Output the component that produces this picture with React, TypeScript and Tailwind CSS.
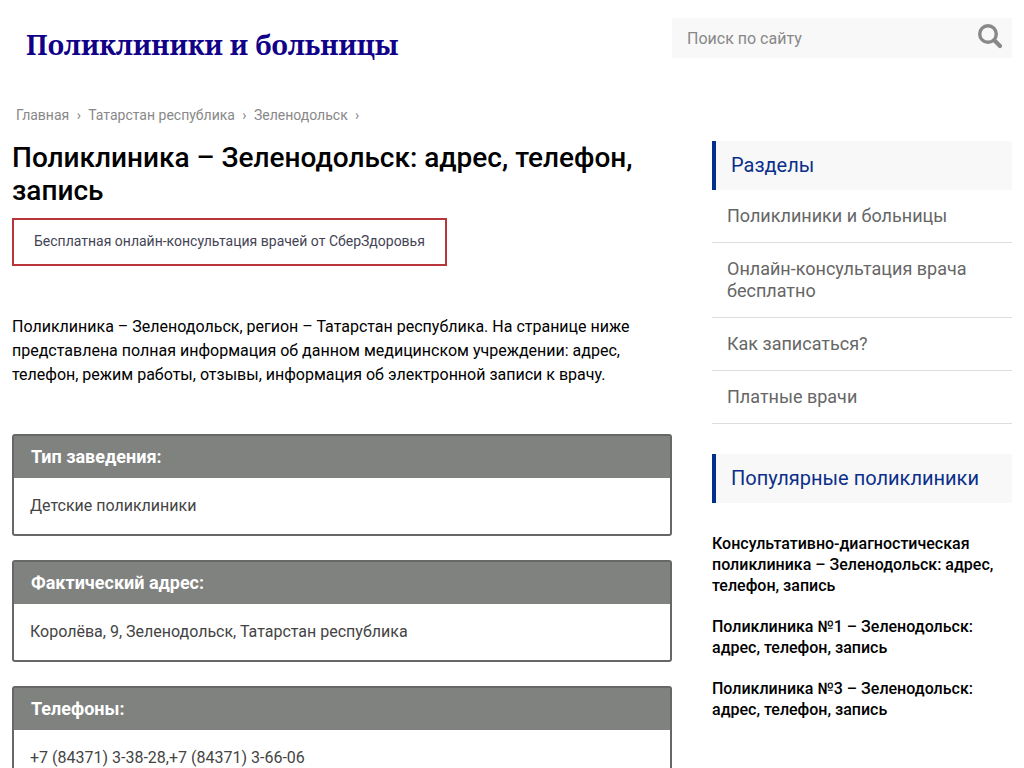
import React from "react";

const crumbs = ["Главная", "Татарстан республика", "Зеленодольск"];

const facts = [
  { title: "Тип заведения:", text: "Детские поликлиники" },
  { title: "Фактический адрес:", text: "Королёва, 9, Зеленодольск, Татарстан республика" },
  { title: "Телефоны:", text: "+7 (84371) 3-38-28,+7 (84371) 3-66-06" },
];

const sections = [
  "Поликлиники и больницы",
  "Онлайн-консультация врача бесплатно",
  "Как записаться?",
  "Платные врачи",
];

const popular = [
  "Консультативно-диагностическая поликлиника – Зеленодольск: адрес, телефон, запись",
  "Поликлиника №1 – Зеленодольск: адрес, телефон, запись",
  "Поликлиника №3 – Зеленодольск: адрес, телефон, запись",
];

function SideTitle({ children }: { children: React.ReactNode }) {
  return (
    <h2 className="border-l-4 border-[#002f8e] bg-[#f8f8f8] py-3 pl-[15px] text-xl leading-[25px] text-[#0b2f8a]">
      {children}
    </h2>
  );
}

export default function App() {
  return (
    <div className="min-h-screen bg-white px-3 font-['Roboto',sans-serif] text-black">
      <header className="flex items-start justify-between pt-[18px]">
        <a
          href="#"
          className="pt-[9px] pl-[14px] font-['Noto_Serif','PT_Serif','DejaVu_Serif',serif] text-[27px] leading-9 font-bold text-[#110088]"
        >
          Поликлиники и больницы
        </a>
        <form role="search" className="flex h-10 w-[340px] bg-[#f8f8f8]">
          <input
            type="search"
            aria-label="Поиск по сайту"
            placeholder="Поиск по сайту"
            className="min-w-0 flex-1 bg-transparent pt-0.5 pl-[15px] text-base text-[#888] outline-none placeholder:text-[#888]"
          />
          <button type="button" aria-label="Найти" className="flex w-11 items-center justify-center pb-1">
            <svg width="26" height="26" viewBox="0 0 26 26" fill="none" stroke="#888" aria-hidden="true">
              <circle cx="11" cy="11" r="8.3" strokeWidth="3.4" />
              <path d="M17.3 17.3 L23 23" strokeWidth="4.2" strokeLinecap="round" />
            </svg>
          </button>
        </form>
      </header>

      <nav aria-label="Навигация" className="mt-[41px] flex pl-1 text-sm leading-[22px] text-[#888]">
        {crumbs.map((c) => (
          <React.Fragment key={c}>
            <a href="#">{c}</a>
            <span className="w-[19px] text-center">›</span>
          </React.Fragment>
        ))}
      </nav>

      <div className="mt-[15px] flex items-start gap-10">
        <main className="min-w-0 flex-1">
          <h1 className="text-[28px] leading-[33px] font-medium">
            Поликлиника – Зеленодольск: адрес, телефон, запись
          </h1>
          <a
            href="#"
            className="mt-[11px] inline-block border-2 border-[#b8353a] px-5 pt-[10px] pb-3 text-sm leading-[22px] text-[#444455]"
          >
            Бесплатная онлайн-консультация врачей от СберЗдоровья
          </a>
          <p className="mt-[49px] text-base leading-6">
            Поликлиника – Зеленодольск, регион – Татарстан республика. На странице ниже
            представлена полная информация об данном медицинском учреждении: адрес,
            телефон, режим работы, отзывы, информация об электронной записи к врачу.
          </p>
          <div className="mt-[47px] flex flex-col gap-6">
            {facts.map((f) => (
              <section key={f.title} className="rounded-[3px] border-2 border-[#666866] bg-white">
                <h2 className="bg-[#80827f] px-[17px] py-[9px] text-lg leading-6 font-bold text-white">{f.title}</h2>
                <p className="px-4 py-4 text-base leading-6 text-[#444]">{f.text}</p>
              </section>
            ))}
          </div>
        </main>

        <aside className="w-[300px] shrink-0">
          <SideTitle>Разделы</SideTitle>
          <ul>
            {sections.map((s) => (
              <li key={s} className="border-b border-[#ddd] px-[15px] py-[15px] text-lg leading-[22px] text-[#666]">
                <a href="#">{s}</a>
              </li>
            ))}
          </ul>
          <div className="mt-[30px]">
            <SideTitle>Популярные поликлиники</SideTitle>
          </div>
          <ul className="mt-[30px] flex flex-col gap-5">
            {popular.map((p) => (
              <li key={p} className="text-base leading-[21px] font-medium">
                <a href="#">{p}</a>
              </li>
            ))}
          </ul>
        </aside>
      </div>
    </div>
  );
}
